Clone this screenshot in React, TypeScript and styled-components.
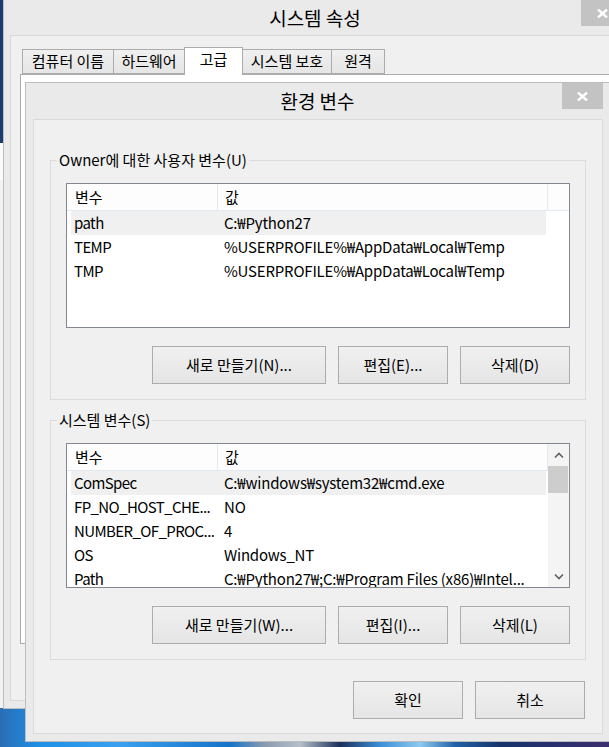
import React from "react";
import styled, { createGlobalStyle } from "styled-components";

const FONT = `"Noto Sans CJK KR", "Noto Sans", sans-serif`;

const Global = createGlobalStyle`
  html, body { margin: 0; padding: 0; background: #1b3a6b; }
  body { font-family: ${FONT}; color: #000; -webkit-font-smoothing: antialiased; }
  #root { width: 609px; height: 747px; }
  * { box-sizing: border-box; }
`;

const Desktop = styled.div`
  position: relative;
  width: 609px;
  height: 747px;
  overflow: hidden;
  background: linear-gradient(
    90deg,
    #2a6db5 0px,
    #1e90e6 40px,
    #3aa0ef 120px,
    #1573c8 230px,
    #8a9bb0 265px,
    #b5bfc9 300px,
    #1c2f5a 340px,
    #3b8fd6 380px,
    #8ec9f0 420px,
    #2262a8 455px,
    #17336b 500px,
    #2a2f70 560px,
    #3c2f6e 609px
  );
`;

const BackWindow = styled.div`
  position: absolute;
  left: -200px;
  top: 0;
  width: 203px;
  height: 708px;
  background: linear-gradient(
    180deg,
    #1c3b70 0px,
    #1c3b70 143px,
    #fafafa 143px,
    #fafafa 180px,
    #f2f2f2 180px
  );
`;

/* ---------- window chrome ---------- */

const Window = styled.div<{ $left: number; $top: number; $w: number; $h: number }>`
  position: absolute;
  left: ${(p) => p.$left}px;
  top: ${(p) => p.$top}px;
  width: ${(p) => p.$w}px;
  height: ${(p) => p.$h}px;
  border: 1px solid #bdbdbd;
  background: #eaeaea;
  display: flex;
  flex-direction: column;
`;

const TitleBar = styled.div<{ $h: number }>`
  height: ${(p) => p.$h}px;
  flex-shrink: 0;
  display: grid;
  grid-template-columns: 1fr auto 1fr;
`;

const TitleText = styled.div`
  grid-column: 2;
  align-self: center;
  font-size: 19px;
  line-height: 24px;
  color: #000;
  white-space: nowrap;
`;

const CloseButton = styled.div<{ $w: number; $mr: number }>`
  grid-column: 3;
  justify-self: end;
  align-self: start;
  width: ${(p) => p.$w}px;
  height: 26px;
  margin-right: ${(p) => p.$mr}px;
  background: #c3c3c3;
  display: flex;
  align-items: center;
  justify-content: center;
`;

const CloseGlyph = () => (
  <svg width="11" height="9" viewBox="0 0 11 9">
    <path d="M1 0.5 L10 8.5 M10 0.5 L1 8.5" stroke="#fff" strokeWidth="2.4" fill="none" />
  </svg>
);

/* ---------- system properties (background window) ---------- */

const SysClient = styled.div`
  flex: 1;
  margin: 0 6px 7px 6px;
  border: 1px solid #d9d9d9;
  background: #f0f0f0;
  display: flex;
  flex-direction: column;
`;

const TabStrip = styled.div`
  height: 28px;
  margin-top: 11px;
  padding-left: 11px;
  display: flex;
  align-items: flex-end;
  position: relative;
  z-index: 1;
`;

const Tab = styled.div<{ $w: number; $active?: boolean }>`
  width: ${(p) => p.$w}px;
  height: ${(p) => (p.$active ? 28 : 25)}px;
  margin-bottom: ${(p) => (p.$active ? 0 : 1)}px;
  margin-left: -1px;
  &:first-child { margin-left: 0; }
  border: 1px solid #acacac;
  border-bottom: ${(p) => (p.$active ? "none" : "1px solid #acacac")};
  background: ${(p) => (p.$active ? "#ffffff" : "linear-gradient(#f0f0f0, #e5e5e5)")};
  font-size: 15px;
  line-height: 22px;
  text-align: center;
  white-space: nowrap;
  position: relative;
  z-index: ${(p) => (p.$active ? 2 : 1)};
`;

const TabPanel = styled.div`
  flex: 1;
  margin: -1px -20px 56px 9px;
  border: 1px solid #acacac;
  background: #ffffff;
`;

/* ---------- environment variables dialog ---------- */

const EnvClient = styled.div`
  flex: 1;
  margin: 0 6px 7px 7px;
  border: 1px solid #dadada;
  background: #f0f0f0;
  display: flex;
  flex-direction: column;
  padding: 30px 16px 0 16px;
`;

const Group = styled.fieldset`
  margin: 0;
  height: 250px;
  border: 1px solid #dcdcdc;
  padding: 13px 0 15px 0;
  min-width: 0;
  display: flex;
  flex-direction: column;
  & + & { margin-top: 10px; }
`;

const GroupLabel = styled.legend`
  margin-left: 6px;
  padding: 0 2px;
  font-size: 15px;
  line-height: 20px;
  white-space: nowrap;
`;

const GroupBody = styled.div`
  padding: 0 15px;
  display: flex;
  flex-direction: column;
`;

const ListBox = styled.div`
  height: 145px;
  border: 1px solid #828790;
  background: #fff;
  display: flex;
  overflow: hidden;
`;

const ListContent = styled.div`
  flex: 1;
  min-width: 0;
  display: flex;
  flex-direction: column;
`;

const Header = styled.div`
  height: 27px;
  flex-shrink: 0;
  display: flex;
  border-bottom: 1px solid #e3e9f1;
  background: #fdfdfd;
`;

const HeadCell = styled.div<{ $w: number; $pad: number }>`
  width: ${(p) => p.$w}px;
  padding-left: ${(p) => p.$pad}px;
  border-right: 1px solid #e3e9f1;
  font-size: 15px;
  line-height: 26px;
  white-space: nowrap;
`;

const Row = styled.div<{ $sel?: boolean }>`
  height: 24px;
  flex-shrink: 0;
  width: 475px;
  margin-left: 4px;
  display: flex;
  background: ${(p) => (p.$sel ? "#f0f0f0" : "transparent")};
`;

const Cell = styled.div<{ $w: number; $pad: number; $ls: number }>`
  width: ${(p) => p.$w}px;
  flex-shrink: 0;
  padding-left: ${(p) => p.$pad}px;
  font-size: 15px;
  line-height: 24px;
  letter-spacing: ${(p) => p.$ls}px;
  white-space: nowrap;
  overflow: hidden;
`;

const ScrollBar = styled.div`
  width: 21px;
  flex-shrink: 0;
  background: #f4f4f4;
  display: flex;
  flex-direction: column;
`;

const ScrollArrow = styled.div`
  height: 22px;
  display: flex;
  align-items: center;
  justify-content: center;
`;

const ScrollThumb = styled.div`
  height: 27px;
  margin: 0 1px 0 0;
  background: #cdcdcd;
`;

const ScrollTrack = styled.div`
  flex: 1;
`;

const Chevron = ({ up }: { up?: boolean }) => (
  <svg width="10" height="7" viewBox="0 0 10 7">
    <polyline
      points={up ? "1,5.5 5,1.5 9,5.5" : "1,1.5 5,5.5 9,1.5"}
      stroke="#606060"
      strokeWidth="1.6"
      fill="none"
    />
  </svg>
);

const ButtonRow = styled.div<{ $mt: number; $mr: number }>`
  margin-top: ${(p) => p.$mt}px;
  margin-right: ${(p) => p.$mr}px;
  display: flex;
  justify-content: flex-end;
  gap: 12px;
`;

const Button = styled.div<{ $w: number }>`
  width: ${(p) => p.$w}px;
  height: 38px;
  border: 1px solid #acacac;
  background: linear-gradient(#f0f0f0, #e5e5e5);
  font-size: 15px;
  line-height: 36px;
  text-align: center;
  white-space: nowrap;
`;

type Var = { name: string; value: string; selected?: boolean };

const userVars: Var[] = [
  { name: "path", value: "C:₩Python27", selected: true },
  { name: "TEMP", value: "%USERPROFILE%₩AppData₩Local₩Temp" },
  { name: "TMP", value: "%USERPROFILE%₩AppData₩Local₩Temp" },
];

const sysVars: Var[] = [
  { name: "ComSpec", value: "C:₩windows₩system32₩cmd.exe", selected: true },
  { name: "FP_NO_HOST_CHE...", value: "NO" },
  { name: "NUMBER_OF_PROC...", value: "4" },
  { name: "OS", value: "Windows_NT" },
  { name: "Path", value: "C:₩Python27₩;C:₩Program Files (x86)₩Intel..." },
];

const VarList = ({ items, scroll }: { items: Var[]; scroll?: boolean }) => (
  <ListBox>
    <ListContent>
      <Header>
        <HeadCell $w={151} $pad={8}>변수</HeadCell>
        <HeadCell $w={330} $pad={7}>값</HeadCell>
      </Header>
      {items.map((v) => (
        <Row key={v.name} $sel={v.selected}>
          <Cell $w={146} $pad={3} $ls={-0.6}>{v.name}</Cell>
          <Cell $w={329} $pad={7} $ls={-0.2}>{v.value}</Cell>
        </Row>
      ))}
    </ListContent>
    {scroll && (
      <ScrollBar>
        <ScrollArrow><Chevron up /></ScrollArrow>
        <ScrollThumb />
        <ScrollTrack />
        <ScrollArrow><Chevron /></ScrollArrow>
      </ScrollBar>
    )}
  </ListBox>
);

export default function App() {
  return (
    <>
      <Global />
      <Desktop>
        <BackWindow />
        <Window $left={3} $top={-1} $w={624} $h={710}>
          <TitleBar $h={35}>
            <TitleText>시스템 속성</TitleText>
            <CloseButton $w={42} $mr={3}><CloseGlyph /></CloseButton>
          </TitleBar>
          <SysClient>
            <TabStrip>
              <Tab $w={92}>컴퓨터 이름</Tab>
              <Tab $w={72}>하드웨어</Tab>
              <Tab $w={59} $active>고급</Tab>
              <Tab $w={90}>시스템 보호</Tab>
              <Tab $w={54}>원격</Tab>
            </TabStrip>
            <TabPanel />
          </SysClient>
        </Window>

        <Window $left={25} $top={82} $w={585} $h={660}>
          <TitleBar $h={36}>
            <TitleText>환경 변수</TitleText>
            <CloseButton $w={41} $mr={6}><CloseGlyph /></CloseButton>
          </TitleBar>
          <EnvClient>
            <Group>
              <GroupLabel>Owner에 대한 사용자 변수(U)</GroupLabel>
              <GroupBody>
                <VarList items={userVars} />
                <ButtonRow $mt={18} $mr={0}>
                  <Button $w={174}>새로 만들기(N)...</Button>
                  <Button $w={110}>편집(E)...</Button>
                  <Button $w={110}>삭제(D)</Button>
                </ButtonRow>
              </GroupBody>
            </Group>
            <Group>
              <GroupLabel>시스템 변수(S)</GroupLabel>
              <GroupBody>
                <VarList items={sysVars} scroll />
                <ButtonRow $mt={18} $mr={0}>
                  <Button $w={174}>새로 만들기(W)...</Button>
                  <Button $w={110}>편집(I)...</Button>
                  <Button $w={110}>삭제(L)</Button>
                </ButtonRow>
              </GroupBody>
            </Group>
            <ButtonRow $mt={21} $mr={1}>
              <Button $w={110}>확인</Button>
              <Button $w={110}>취소</Button>
            </ButtonRow>
          </EnvClient>
        </Window>
      </Desktop>
    </>
  );
}
